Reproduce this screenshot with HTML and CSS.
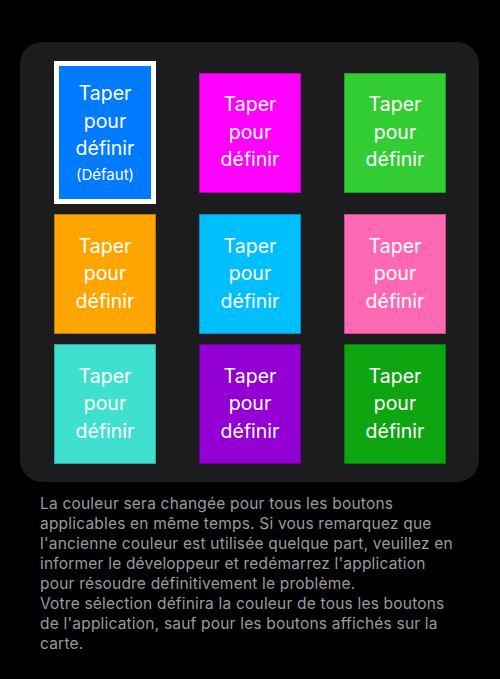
FILE: index.html
```html
<!DOCTYPE html>
<html lang="fr">
<head>
<meta charset="utf-8">
<link rel="stylesheet" href="styles.css">
</head>
<body>
<main class="page">
  <section class="card">
    <div class="grid">
      <div class="tile selected blue"><span>Taper<br>pour<br>définir</span><span class="default">(Défaut)</span></div>
      <div class="tile magenta"><span>Taper<br>pour<br>définir</span></div>
      <div class="tile lime"><span>Taper<br>pour<br>définir</span></div>
      <div class="tile orange"><span>Taper<br>pour<br>définir</span></div>
      <div class="tile sky"><span>Taper<br>pour<br>définir</span></div>
      <div class="tile pink"><span>Taper<br>pour<br>définir</span></div>
      <div class="tile turquoise"><span>Taper<br>pour<br>définir</span></div>
      <div class="tile violet"><span>Taper<br>pour<br>définir</span></div>
      <div class="tile green"><span>Taper<br>pour<br>définir</span></div>
    </div>
  </section>
  <p class="note">La couleur sera changée pour tous les boutons<br>applicables en même temps. Si vous remarquez que<br>l'ancienne couleur est utilisée quelque part, veuillez en<br>informer le développeur et redémarrez l'application<br>pour résoudre définitivement le problème.<br>Votre sélection définira la couleur de tous les boutons<br>de l'application, sauf pour les boutons affichés sur la<br>carte.</p>
</main>
</body>
</html>
```
FILE: styles.css
```css
html, body {
  margin: 0;
  padding: 0;
  background: #000;
}
body {
  font-family: Inter, "Noto Sans", "Liberation Sans", sans-serif;
  color: #fff;
  width: 500px;
  height: 679px;
  overflow: hidden;
}
.page {
  padding: 42px 21px 0 20px;
}
.card {
  background: #1c1c1e;
  border-radius: 22px;
  padding: 19px 33px 18px 34px;
}
.grid {
  display: grid;
  grid-template-columns: repeat(3, 102px);
  column-gap: 43px;
  row-gap: 10px;
  align-items: center;
}
.tile {
  box-sizing: border-box;
  height: 120px;
  display: flex;
  flex-direction: column;
  align-items: center;
  justify-content: center;
  text-align: center;
  font-size: 19.5px;
  line-height: 27.5px;
  color: #fff;
  border: 1px solid rgba(0,0,0,0.25);
}
.tile.selected {
  height: 143px;
  border: 5px solid #fff;
  padding-top: 2px;
}
.default {
  font-size: 15px;
  line-height: 24px;
}
.blue { background: #007aff; }
.magenta { background: #ff00ff; }
.lime { background: #32cd32; }
.orange { background: #ffa500; }
.sky { background: #00bfff; }
.pink { background: #ff69b4; }
.turquoise { background: #40e0d0; }
.violet { background: #9400d3; }
.green { background: #0da510; }
.note {
  margin: 12px 0 0 20px;
  font-size: 15.5px;
  line-height: 20px;
  color: #9a9a9f;
  letter-spacing: 0.2px;
}
```
